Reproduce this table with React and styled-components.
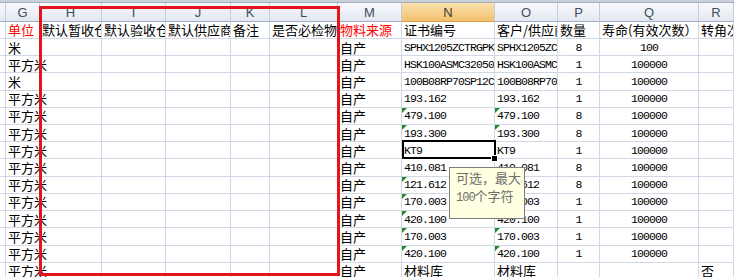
import React from 'react';
import styled, { createGlobalStyle, css } from 'styled-components';

const GlobalStyle = createGlobalStyle`
  html, body { margin: 0; padding: 0; background: #fff; overflow: hidden; }
  body { font-family: "Noto Sans CJK SC", sans-serif; }
`;

const CJK = `"Noto Sans CJK SC", sans-serif`;
const MONO = `"Liberation Mono", monospace`;

const COLUMNS = [
  { key: 'F', w: '6px', label: '' },
  { key: 'G', w: '34px' },
  { key: 'H', w: '62px' },
  { key: 'I', w: '64px' },
  { key: 'J', w: '65px' },
  { key: 'K', w: '39px' },
  { key: 'L', w: '68px' },
  { key: 'M', w: '64px' },
  { key: 'N', w: '93px', selected: true },
  { key: 'O', w: '63px' },
  { key: 'P', w: '42px' },
  { key: 'Q', w: '99px' },
  { key: 'R', w: '1fr' },
];

const fill = (n, v) => Array(n).fill(v);
const codes = [
  '证书编号', 'SPHX1205ZCTRGPK', 'HSK100ASMC32050', '100B08RP70SP12C', '193.162', '479.100',
  '193.300', 'KT9', '410.081', '121.612', '170.003', '420.100', '170.003', '420.100', '材料库',
];
const FLAGGED = [5, 6, 9, 10, 11, 12, 13];

const DATA = {
  F: fill(15, ''),
  G: ['单位', '米', '平方米', '米', ...fill(11, '平方米')],
  H: ['默认暂收仓库', ...fill(14, '')],
  I: ['默认验收仓库', ...fill(14, '')],
  J: ['默认供应商', ...fill(14, '')],
  K: ['备注', ...fill(14, '')],
  L: ['是否必检物料', ...fill(14, '')],
  M: ['物料来源', ...fill(14, '自产')],
  N: codes,
  O: ['客户/供应商', ...codes.slice(1)],
  P: ['数量', '8', '1', '1', '1', '8', '8', '1', '8', '8', '1', '1', '1', '1', ''],
  Q: ['寿命(有效次数）', '100', ...fill(12, '100000'), ''],
  R: ['转角次数', ...fill(13, ''), '否'],
};

const RED_HEAD = { G: true, M: true };
const CENTERED = { P: true, Q: true };
const OVERFLOW = { G: true };

const Page = styled.div`
  position: relative;
  width: 734px;
  height: 277px;
  overflow: hidden;
`;

const TopBar = styled.div`
  height: 2px;
  background: #c9d0da;
  border-bottom: 1px solid #a3b0c2;
`;

const Sheet = styled.div`
  display: grid;
  grid-template-columns: ${COLUMNS.map((c) => c.w).join(' ')};
  grid-template-rows: 18.7px repeat(15, 17.22px);
`;

const ColHeader = styled.div`
  box-sizing: border-box;
  display: flex;
  align-items: flex-end;
  justify-content: center;
  padding-bottom: 1px;
  font-family: "Liberation Sans", Arial, sans-serif;
  font-size: 13px;
  line-height: 15px;
  color: #3f4d60;
  border-right: 1px solid #c3ccd8;
  border-bottom: 1px solid #9eb0c6;
  background: linear-gradient(#f7f9fc, #e3e8f0);
  ${(p) =>
    p.$selected &&
    css`
      background: linear-gradient(#fbe1ad, #f3c06c);
      border-bottom-color: #d9a24f;
      color: #3a3a3a;
    `}
`;

const Cell = styled.div`
  position: relative;
  box-sizing: border-box;
  display: flex;
  align-items: center;
  justify-content: ${(p) => (p.$center ? 'center' : 'flex-start')};
  padding: 0 2px 0 2px;
  white-space: nowrap;
  overflow: ${(p) => (p.$overflow ? 'visible' : 'hidden')};
  border-right: 1px solid #d0d7e5;
  border-bottom: 1px solid #d0d7e5;
  color: ${(p) => (p.$red ? '#ff0000' : '#000')};
  font-family: ${(p) => (p.$mono ? MONO : CJK)};
  font-size: ${(p) => (p.$mono ? '11.5px' : '13px')};
  letter-spacing: ${(p) => (p.$mono ? '-0.9px' : '0')};
  line-height: 17px;
  ${(p) =>
    p.$flag &&
    css`
      &::before {
        content: '';
        position: absolute;
        left: 0;
        top: 0;
        border-top: 5px solid #1f8a2e;
        border-right: 5px solid transparent;
      }
    `}
  ${(p) =>
    p.$active &&
    css`
      &::after {
        content: '';
        position: absolute;
        left: 0;
        top: -2px;
        right: -2px;
        bottom: -1px;
        border: 2px solid #000;
        pointer-events: none;
      }
    `}
`;

const FillHandle = styled.span`
  position: absolute;
  right: -4px;
  bottom: -4px;
  width: 5px;
  height: 5px;
  background: #000;
  border: 1px solid #fff;
  z-index: 2;
`;

const RedFrame = styled.div`
  position: absolute;
  left: 39px;
  top: 6px;
  width: 301px;
  height: 270px;
  box-sizing: border-box;
  border: 3px solid #e2141c;
  pointer-events: none;
`;

const Tooltip = styled.div`
  position: absolute;
  left: 449px;
  top: 167px;
  width: 76px;
  height: 52px;
  box-sizing: border-box;
  padding: 1px 0 0 6px;
  background: #ffffe1;
  border: 1px solid #7d7d7d;
  color: #6e6e6e;
  font-family: ${CJK};
  font-size: 13px;
  line-height: 18px;
`;

const Lat = styled.span`
  font-family: ${MONO};
  font-size: 12px;
  letter-spacing: -1px;
`;

const isAscii = (s) => /^[\x00-\x7F]+$/.test(s);

export default function App() {
  const rows = Array.from({ length: 15 }, (_, r) => r);
  return (
    <Page>
      <GlobalStyle />
      <TopBar />
      <Sheet>
        {COLUMNS.map((c) => (
          <ColHeader key={`h-${c.key}`} $selected={c.selected}>
            {c.label === '' ? '' : c.key}
          </ColHeader>
        ))}
        {rows.map((r) =>
          COLUMNS.map((c) => {
            const text = DATA[c.key][r];
            const active = c.key === 'N' && r === 7;
            const flag = (c.key === 'N' || c.key === 'O') && FLAGGED.includes(r);
            return (
              <Cell
                key={`${c.key}-${r}`}
                $red={r === 0 && RED_HEAD[c.key]}
                $center={r > 0 && CENTERED[c.key]}
                $mono={text !== '' && isAscii(text)}
                $overflow={OVERFLOW[c.key] || active}
                $flag={flag}
                $active={active}
              >
                {text}
                {active && <FillHandle />}
              </Cell>
            );
          })
        )}
      </Sheet>
      <RedFrame />
      <Tooltip>
        <div>可选，最大</div>
        <div>
          <Lat>100</Lat>个字符
        </div>
      </Tooltip>
    </Page>
  );
}
